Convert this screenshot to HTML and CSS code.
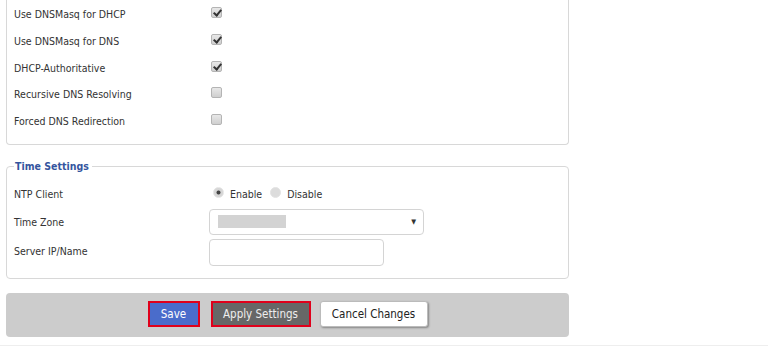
FILE: index.html
```html
<!DOCTYPE html>
<html lang="en">
<head>
    <meta charset="UTF-8">
    <title>DHCP / Time Settings</title>
    <link rel="stylesheet" href="styles.css">
</head>
<body>

    <div class="page">

        <div class="box box-open">
            <div class="row">
                <span class="label">Use DNSMasq for DHCP</span>
                <span class="check on"></span>
            </div>
            <div class="row">
                <span class="label">Use DNSMasq for DNS</span>
                <span class="check on"></span>
            </div>
            <div class="row">
                <span class="label">DHCP-Authoritative</span>
                <span class="check on"></span>
            </div>
            <div class="row">
                <span class="label">Recursive DNS Resolving</span>
                <span class="check"></span>
            </div>
            <div class="row">
                <span class="label">Forced DNS Redirection</span>
                <span class="check"></span>
            </div>
        </div>

        <fieldset class="box">
            <legend>Time Settings</legend>
            <div class="row row-radio">
                <span class="label">NTP Client</span>
                <span class="radio on"></span><span class="radio-text">Enable</span>
                <span class="radio"></span><span class="radio-text">Disable</span>
            </div>
            <div class="row row-field">
                <span class="label">Time Zone</span>
                <div class="select">
                    <span class="select-value"></span>
                    <span class="select-arrow">&#9660;</span>
                </div>
            </div>
            <div class="row row-field">
                <span class="label">Server IP/Name</span>
                <div class="text-input"></div>
            </div>
        </fieldset>

        <div class="button-bar">
            <button class="btn btn-save">Save</button>
            <button class="btn btn-apply">Apply Settings</button>
            <button class="btn btn-cancel">Cancel Changes</button>
        </div>

    </div>

    <div class="footer-line"></div>

</body>
</html>
```

FILE: styles.css
```css
* {
    margin: 0;
    padding: 0;
    box-sizing: border-box;
}

body {
    font-family: 'DejaVu Sans Condensed', 'DejaVu Sans', Verdana, sans-serif;
    font-size: 10.5px;
    color: #333;
    background: #fff;
}

.page {
    width: 563px;
    margin-left: 6px;
}

/* Caixas de configuração */
.box {
    border: 1px solid #d8d8d8;
    border-radius: 4px;
    padding: 0 7px 11px 7px;
    min-width: 0;
}

.box-open {
    border-top: none;
    border-top-left-radius: 0;
    border-top-right-radius: 0;
    padding-top: 1px;
    height: 145px;
    margin-bottom: 15px;
}

fieldset.box {
    height: 119px;
    padding-top: 8px;
}

legend {
    color: #34559e;
    font-weight: bold;
    font-size: 10.5px;
    padding: 0 3px 0 1px;
    margin-left: 0;
    line-height: 12px;
}

.row {
    display: flex;
    align-items: center;
    height: 26.7px;
}

.label {
    width: 197px;
    flex-shrink: 0;
}

/* Checkbox */
.check {
    width: 11px;
    height: 11px;
    border: 1px solid #b4b4b4;
    border-radius: 2px;
    background: linear-gradient(#e8e8e8, #cfcfcf);
    margin-top: -3px;
    position: relative;
}

.check.on::after {
    content: "";
    position: absolute;
    left: 3px;
    top: 0px;
    width: 3px;
    height: 6px;
    border: solid #333;
    border-width: 0 2px 2px 0;
    transform: rotate(40deg);
}

/* Radio */
.row-radio {
    height: 27px;
}

.radio {
    width: 11px;
    height: 11px;
    border-radius: 50%;
    background: #dcdcdc;
    border: 1px solid #e4e4e4;
    margin: -3px 6px 0 2px;
    position: relative;
}

.radio.on {
    background: radial-gradient(circle, #444 0, #444 1.6px, #d6d6d6 2.4px);
}

.radio-text {
    margin-right: 6px;
}

.row-field {
    height: 29px;
}

.select {
    width: 215px;
    height: 26px;
    margin-left: -2px;
    border: 1px solid #d4d4d4;
    border-radius: 4px;
    display: flex;
    align-items: center;
    justify-content: space-between;
    padding: 0 7px 0 8px;
}

.select-value {
    width: 68px;
    height: 13px;
    background: #d3d3d3;
}

.select-arrow {
    font-size: 7px;
    color: #333;
}

.text-input {
    width: 175px;
    height: 27px;
    margin-left: -2px;
    border: 1px solid #d4d4d4;
    border-radius: 4px;
    margin-top: 3px;
}

/* Barra de botões */
.button-bar {
    margin-top: 14px;
    height: 44px;
    background: #cccccc;
    border-radius: 4px;
    display: flex;
    align-items: center;
    justify-content: center;
    gap: 11px;
    padding-bottom: 2px;
}

.btn {
    font-family: 'DejaVu Sans Condensed', 'DejaVu Sans', Verdana, sans-serif;
    font-size: 11.5px;
    height: 26px;
    border-radius: 3px;
    padding: 0;
    white-space: nowrap;
}

.btn-save {
    width: 52px;
    background: #4a6ccb;
    color: #fff;
    border: 2px solid #e0001b;
    border-radius: 0;
}

.btn-apply {
    width: 100px;
    background: #676767;
    color: #eee;
    border: 2px solid #e0001b;
    border-radius: 0;
}

.btn-cancel {
    width: 108px;
    background: #fff;
    color: #222;
    border: 1px solid #bbb;
    box-shadow: 1px 1px 2px rgba(0, 0, 0, 0.35);
    margin-left: -2px;
}

.footer-line {
    margin-top: 8px;
    border-top: 1px solid #eeeeee;
}
```
